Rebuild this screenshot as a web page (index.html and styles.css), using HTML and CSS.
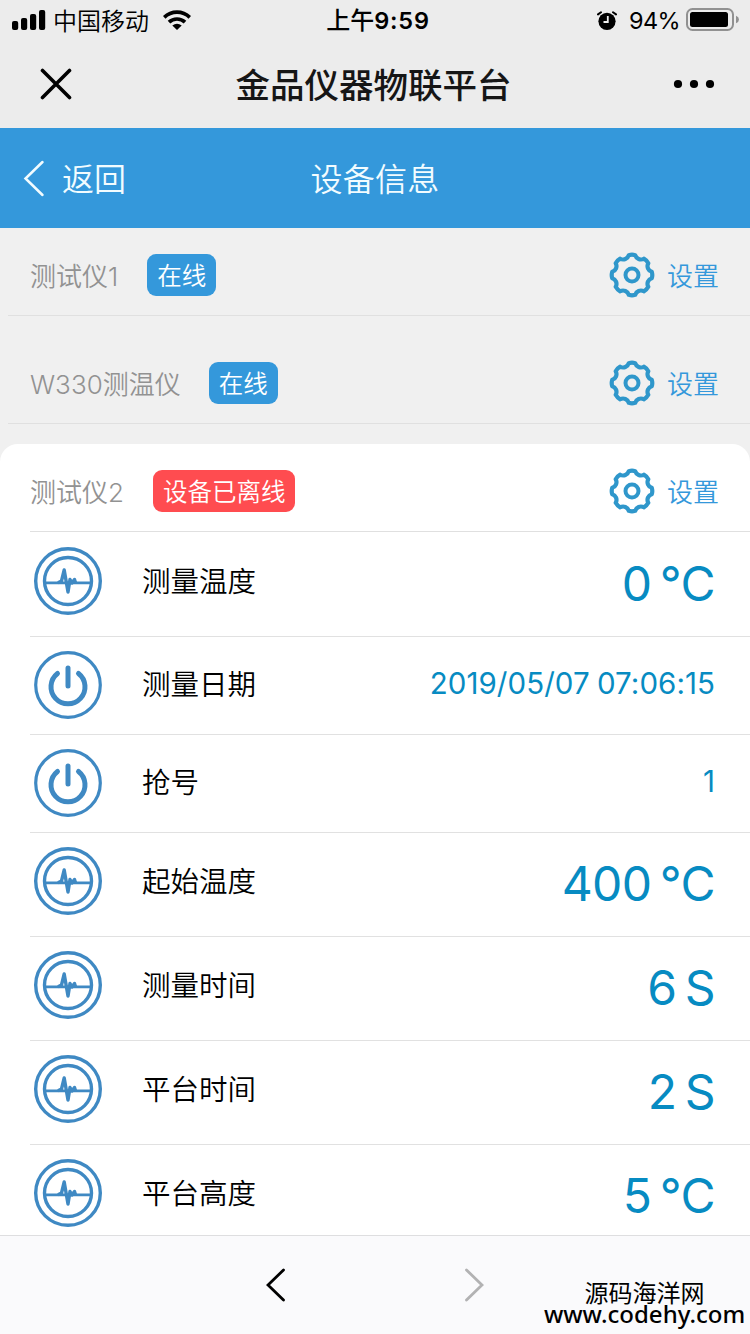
FILE: index.html
```html
<!DOCTYPE html>
<html lang="zh-CN">
<head>
<meta charset="utf-8">
<title>金品仪器物联平台</title>
<link rel="stylesheet" href="styles.css">
</head>
<body>
<svg class="defs" width="0" height="0">
  <symbol id="gear" viewBox="-23 -23 46 46">
    <path d="M-3.2-19.8Q0-20.8 3.2-19.8A5.9 5.9 0 0 0 11.8-16.3Q14.7-14.7 16.3-11.8A5.9 5.9 0 0 0 19.8-3.2Q20.8 0 19.8 3.2A5.9 5.9 0 0 0 16.3 11.8Q14.7 14.7 11.8 16.3A5.9 5.9 0 0 0 3.2 19.8Q0 20.8-3.2 19.8A5.9 5.9 0 0 0-11.8 16.3Q-14.7 14.7-16.3 11.8A5.9 5.9 0 0 0-19.8 3.2Q-20.8 0-19.8-3.2A5.9 5.9 0 0 0-16.3-11.8Q-14.7-14.7-11.8-16.3A5.9 5.9 0 0 0-3.2-19.8Z" fill="none" stroke="#2f97cb" stroke-width="4.2" stroke-linejoin="round"/>
    <circle r="6.5" fill="none" stroke="#2f97cb" stroke-width="4"/>
  </symbol>
  <symbol id="pulse" viewBox="0 0 70 70">
    <g fill="none" stroke="#3f89c3" stroke-width="3.4" stroke-linejoin="round">
      <circle cx="35" cy="35" r="32.3"/>
      <circle cx="35" cy="35" r="23.5"/>
      <path d="M11.5 36.8H58.5" stroke-width="2.8"/>
      <path d="M25 36.8L28.5 35L31.2 24L35 46L37 33.5L39 37L41.5 33.5L42.5 36.8" stroke-width="3.4"/>
    </g>
  </symbol>
  <symbol id="power" viewBox="0 0 70 70">
    <g fill="none" stroke="#3f89c3" stroke-linecap="round">
      <circle cx="35" cy="35" r="32.3" stroke-width="3.2"/>
      <path d="M24.5 23.5A17 17 0 1 0 45.5 23.5" stroke-width="5"/>
      <path d="M35 18V36" stroke-width="5"/>
    </g>
  </symbol>
</svg>
<div class="screen">
  <header class="chrome">
    <div class="status">
      <div class="status-left">
        <svg width="34" height="20" viewBox="0 0 34 20"><rect x="0" y="11" width="6.2" height="9" rx="2"/><rect x="9" y="8" width="6.2" height="12" rx="2"/><rect x="18" y="4" width="6.2" height="16" rx="2"/><rect x="27" y="0" width="6.2" height="20" rx="2"/></svg>
        <span class="carrier">中国移动</span>
        <svg width="28" height="20" viewBox="0 0 28 20"><g fill="none" stroke="#000" stroke-width="3.7"><path d="M1.2 7.3A18.5 18.5 0 0 1 26.8 7.3"/><path d="M6 12.2A11.6 11.6 0 0 1 22 12.2"/></g><path d="M9.3 15.6Q14 11.8 18.7 15.6L14 20Z"/></svg>
      </div>
      <div class="time">上午<b>9:59</b></div>
      <div class="status-right">
        <svg width="20" height="19" viewBox="0 0 20 19"><circle cx="10" cy="10.3" r="8.6"/><path d="M1 3.4L4 1.3M19 3.4L16 1.3" stroke="#000" stroke-width="2" stroke-linecap="round"/><path d="M10.8 5V11H6.5" fill="none" stroke="#eee" stroke-width="1.8"/></svg>
        <span class="percent">94%</span>
        <svg width="53" height="24" viewBox="0 0 53 24"><rect x="1" y="1" width="46" height="21" rx="5.5" fill="none" stroke="#919191" stroke-width="2"/><rect x="4" y="4" width="38" height="15" rx="2.5"/><path d="M50 7.8Q53 9 53 11.5T50 15.2Z" fill="#919191"/></svg>
      </div>
    </div>
    <div class="title-row">
      <svg width="32" height="32" viewBox="0 0 32 32"><path d="M2.5 2.5L29.5 29.5M29.5 2.5L2.5 29.5" stroke="#000" stroke-width="3.6" stroke-linecap="round"/></svg>
      <h1 class="app-title">金品仪器物联平台</h1>
      <svg width="42" height="10" viewBox="0 0 42 10"><circle cx="5" cy="5" r="4.1"/><circle cx="21" cy="5" r="4.1"/><circle cx="37" cy="5" r="4.1"/></svg>
    </div>
  </header>
  <nav class="nav">
    <a class="back"><svg width="22" height="38" viewBox="0 0 22 38"><path d="M19.5 3L2.5 19.5L19.5 36" fill="none" stroke="#f2fcff" stroke-width="2.5" stroke-linecap="round"/></svg><span>返回</span></a>
    <h2 class="nav-title">设备信息</h2>
  </nav>
  <main class="list">
    <section class="device">
      <div class="device-head"><span class="name">测试仪1</span><span class="badge online">在线</span><a class="settings"><svg width="46" height="46"><use href="#gear"/></svg><span>设置</span></a></div>
    </section>
    <section class="device">
      <div class="device-head"><span class="name model">W330测温仪</span><span class="badge online">在线</span><a class="settings"><svg width="46" height="46"><use href="#gear"/></svg><span>设置</span></a></div>
    </section>
    <section class="device card">
      <div class="device-head"><span class="name">测试仪2</span><span class="badge offline">设备已离线</span><a class="settings"><svg width="46" height="46"><use href="#gear"/></svg><span>设置</span></a></div>
      <ul class="rows">
        <li class="row first"><svg class="icon"><use href="#pulse"/></svg><span class="label">测量温度</span><span class="value">0 °C</span></li>
        <li class="row short"><svg class="icon"><use href="#power"/></svg><span class="label">测量日期</span><span class="value small">2019/05/07 07:06:15</span></li>
        <li class="row short"><svg class="icon"><use href="#power"/></svg><span class="label">抢号</span><span class="value small">1</span></li>
        <li class="row"><svg class="icon"><use href="#pulse"/></svg><span class="label">起始温度</span><span class="value">400 °C</span></li>
        <li class="row"><svg class="icon"><use href="#pulse"/></svg><span class="label">测量时间</span><span class="value">6 S</span></li>
        <li class="row"><svg class="icon"><use href="#pulse"/></svg><span class="label">平台时间</span><span class="value">2 S</span></li>
        <li class="row"><svg class="icon"><use href="#pulse"/></svg><span class="label">平台高度</span><span class="value">5 °C</span></li>
      </ul>
    </section>
  </main>
  <footer class="toolbar">
    <svg width="20" height="34" viewBox="0 0 20 34"><path d="M17.5 2L2 17L17.5 32" fill="none" stroke="#000" stroke-width="2.8" stroke-linecap="round"/></svg>
    <svg width="20" height="34" viewBox="0 0 20 34"><path d="M2.5 2L18 17L2.5 32" fill="none" stroke="#b2b2b3" stroke-width="2.8" stroke-linecap="round"/></svg>
  </footer>
  <div class="watermark"><span>源码海洋网</span><span class="site">www.codehy.com</span></div>
</div>
</body>
</html>
```

FILE: styles.css
```css
* { box-sizing: border-box; }
body { margin: 0; font-family: Inter, "Noto Sans CJK SC", sans-serif; color: #000; }
svg { display: block; flex: none; }
.defs { position: absolute; }
.screen { position: relative; width: 750px; height: 1334px; overflow: hidden; display: flex; flex-direction: column; background: #f0f0f0; }
span, h1, h2, .time { white-space: nowrap; }

.chrome { height: 128px; flex: none; background: #ececec; }
.status { height: 40px; padding: 0 11px 0 12px; display: grid; grid-template-columns: 1fr auto 1fr; align-items: center; }
.status-left, .status-right { display: flex; align-items: center; }
.status-right { justify-content: flex-end; }
.carrier { margin: 0 14px 0 7px; padding-top: 3px; font-size: 24px; line-height: 37px; font-weight: 350; }
.time { padding: 2px 0 0 5px; font-size: 24px; line-height: 38px; font-weight: 500; }
.time b { font-weight: 600; font-size: 23.5px; letter-spacing: 0.8px; }
.percent { margin: 0 6px 0 12px; padding-top: 2px; font-size: 23.5px; line-height: 38px; letter-spacing: -0.6px; }
.title-row { height: 88px; padding: 0 35px 0 40px; display: grid; grid-template-columns: 1fr auto 1fr; align-items: center; }
.title-row svg:last-child { justify-self: end; }
.app-title { margin: 0; padding: 4px 8px 0 0; font-size: 34.5px; line-height: 84px; font-weight: 500; color: #161616; }

.nav { height: 100px; flex: none; padding: 0 23px; display: grid; grid-template-columns: 1fr auto 1fr; align-items: center; background: #3498db; color: #f2fcff; }
.back { display: flex; align-items: center; gap: 17px; font-size: 32px; line-height: 48px; }
.back span, .nav-title { padding-top: 3px; font-weight: 350; }
.nav-title { margin: 0; font-size: 32px; line-height: 48px; letter-spacing: 0.2px; }

.list { flex: 1; min-height: 0; overflow: hidden; display: flex; flex-direction: column; gap: 20px; }
.device { flex: none; }
.device-head { height: 88px; margin-left: 8px; padding: 6px 31px 0 22px; display: flex; align-items: center; border-bottom: 1px solid #e0e0e0; }
.name { margin-right: 29px; padding-bottom: 1px; font-size: 26px; font-weight: 350; color: #929292; }
.model { margin-right: 28px; }
.badge { height: 42px; padding: 0 10px; border-radius: 9px; font-size: 24.5px; line-height: 44px; font-weight: 350; color: #fff; }
.online { background: #3498db; }
.offline { background: #ff4c50; }
.settings { margin-left: auto; display: flex; align-items: center; gap: 12px; font-size: 26px; font-weight: 350; color: #3498db; }
.card { background: #fff; border-radius: 18px 18px 0 0; }
.card .device-head { margin-left: 30px; padding-left: 0; }

.rows { margin: 0; padding: 0 0 0 30px; list-style: none; }
.row { height: 104px; padding: 0 35px 7px 3px; display: flex; align-items: center; border-bottom: 1px solid #e1e1e1; }
.first { height: 105px; padding-bottom: 6px; }
.short { height: 98px; padding-bottom: 2px; }
.icon { width: 70px; height: 70px; }
.label { margin-left: 39px; padding-top: 1px; font-size: 28.5px; line-height: 44px; font-weight: 350; }
.value { margin-left: auto; font-size: 48px; line-height: 58px; padding-top: 5px; letter-spacing: -0.6px; word-spacing: -4.5px; color: #078bc2; }
.small { font-size: 29.5px; line-height: 44px; padding: 0 0 3px; letter-spacing: 0.05px; word-spacing: -1px; }

.toolbar { height: 99px; flex: none; padding: 0 266px; display: flex; align-items: center; justify-content: space-between; border-top: 1px solid #dedee0; background: #fafafc; }
.watermark { position: absolute; left: 543px; top: 1279px; width: 203px; display: flex; flex-direction: column; align-items: center; font-family: "Noto Sans", "Noto Sans CJK SC", sans-serif; font-size: 24px; line-height: 28px; font-weight: 400; }
.site { margin-top: -7px; font-family: "Noto Sans", sans-serif; font-size: 24px; font-weight: 500; }
```
